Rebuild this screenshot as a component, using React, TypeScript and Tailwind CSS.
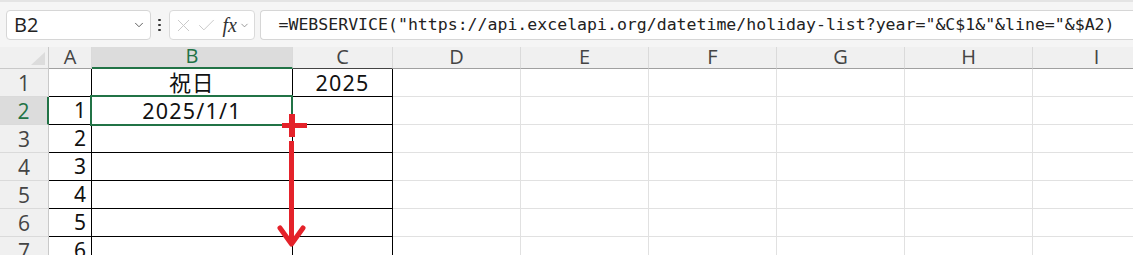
import { Check, ChevronDown, X } from "lucide-react";
import { clsx as cn } from "clsx";

const FORMULA =
  '=WEBSERVICE("https://api.excelapi.org/datetime/holiday-list?year="&C$1&"&line="&$A2)';

const COLUMNS = ["A", "B", "C", "D", "E", "F", "G", "H", "I"];

// cell values, row by row, for columns A..C
const ROWS: { a: string; b: string; c: string }[] = [
  { a: "", b: "祝日", c: "2025" },
  { a: "1", b: "2025/1/1", c: "" },
  { a: "2", b: "", c: "" },
  { a: "3", b: "", c: "" },
  { a: "4", b: "", c: "" },
  { a: "5", b: "", c: "" },
  { a: "6", b: "", c: "" },
];

function FormulaBar() {
  return (
    <div className="flex h-[47px] items-start border-t-2 border-[#e4e4e4] bg-[#f5f5f5] pt-[8px]">
      <div className="ml-[6px] flex h-[30px] w-[145px] items-center justify-between rounded-[4px] border border-[#d6d6d6] bg-white pl-[7px] pr-[4px]">
        <span className="font-['Open_Sans'] text-[20px] leading-none text-[#222]">B2</span>
        <ChevronDown className="h-[14px] w-[14px] text-[#555]" strokeWidth={1.6} />
      </div>
      <div className="ml-[7px] flex h-[30px] flex-col items-center justify-center gap-[2.5px]">
        <span className="h-[2.5px] w-[2.5px] rounded-full bg-[#333]" />
        <span className="h-[2.5px] w-[2.5px] rounded-full bg-[#333]" />
        <span className="h-[2.5px] w-[2.5px] rounded-full bg-[#333]" />
      </div>
      <div className="ml-[8px] flex h-[30px] w-[86px] items-center rounded-[4px] border border-[#dadada] bg-white pl-[3px]">
        <X className="h-[21px] w-[21px] text-[#c8c8c8]" strokeWidth={1.1} />
        <Check className="ml-[2px] h-[21px] w-[21px] text-[#c8c8c8]" strokeWidth={1.1} />
        <span className="ml-[6px] font-['Liberation_Serif'] text-[20px] italic leading-none text-[#333]">fx</span>
        <ChevronDown className="ml-[2px] h-[11px] w-[11px] text-[#777]" strokeWidth={1.6} />
      </div>
      <div className="ml-[5px] flex h-[30px] flex-1 items-center rounded-l-[4px] border border-r-0 border-[#d6d6d6] bg-white pl-[18px]">
        <span className="whitespace-nowrap font-['DejaVu_Sans_Mono'] text-[16.55px] leading-none text-[#222]">
          {FORMULA}
        </span>
      </div>
    </div>
  );
}

function FillArrow() {
  return (
    <svg className="pointer-events-none absolute left-0 top-0" width="400" height="220" viewBox="0 47 400 220">
      <rect x="282" y="123" width="25" height="5" fill="#e4222a" />
      <rect x="289" y="114" width="6" height="23" fill="#e4222a" />
      <rect x="289" y="141" width="5" height="100" fill="#e4222a" />
      <polyline points="280,228 291.5,244 303,228" fill="none" stroke="#e4222a" strokeWidth="5" strokeLinecap="round" strokeLinejoin="round" />
    </svg>
  );
}

function Grid() {
  return (
    <div className="relative">
      <div className="grid grid-cols-[49px_43px_201px_100px_128px_128px_128px_128px_128px_128px] grid-rows-[22px_repeat(7,28px)] font-['Open_Sans'] text-[#444]">
        {/* corner */}
        <div className="relative border-b border-r border-[#c9c9c9] bg-[#f0f0f0]">
          <svg className="absolute bottom-[3px] right-[3px]" width="14" height="13" viewBox="0 0 14 13">
            <polygon points="0,13 14,13 14,0" fill="#dcdcdc" />
          </svg>
        </div>
        {COLUMNS.map((c) => (
          <div
            key={c}
            className={cn(
              "flex items-end justify-center border-r border-[#dadada] text-[20px] leading-none",
              c === "B"
                ? "border-b-2 border-b-[#217346] bg-[#dcdcdc] text-[#217346]"
                : c === "C"
                  ? "border-b border-b-[#444] bg-[#f0f0f0]"
                  : "border-b border-b-[#a0a0a0] bg-[#f0f0f0]"
            )}
          >
            <span className="pb-[1px]">{c}</span>
          </div>
        ))}

        {ROWS.map((row, i) => {
          const selected = i === 1;
          return [
            <div
              key={`h${i}`}
              className={cn(
                "flex items-end justify-center border-b border-b-[#dadada] pb-[2px] text-[21px] leading-none",
                selected
                  ? "border-r-2 border-r-[#217346] bg-[#dcdcdc] text-[#217346]"
                  : "border-r border-r-[#c9c9c9] bg-[#f0f0f0]"
              )}
            >
              {i + 1}
            </div>,
            <div
              key={`a${i}`}
              className="flex items-end justify-end border-b border-r border-black pb-[3px] pr-[5px] font-['Noto_Sans','Noto_Sans_CJK_JP',sans-serif] text-[21px] leading-none text-[#111]"
            >
              {row.a}
            </div>,
            <div
              key={`b${i}`}
              className="flex items-end justify-center border-b border-r border-black pb-[3px] font-['Noto_Sans','Noto_Sans_CJK_JP',sans-serif] text-[21.5px] leading-none tracking-[1.2px] text-[#111]"
            >
              {row.b}
            </div>,
            <div
              key={`c${i}`}
              className="flex items-end justify-center border-b border-r border-black pb-[3px] font-['Noto_Sans','Noto_Sans_CJK_JP',sans-serif] text-[21.5px] leading-none tracking-[1.2px] text-[#111]"
            >
              {row.c}
            </div>,
            ...COLUMNS.slice(3).map((c) => (
              <div key={`${c}${i}`} className="border-b border-r border-[#e1e1e1] bg-white" />
            )),
          ];
        })}
      </div>

      {/* active cell B2 */}
      <div className="pointer-events-none absolute left-[90px] top-[48px] h-[31px] w-[203px] border-2 border-[#217346]" />
      <FillArrow />
    </div>
  );
}

export default function App() {
  return (
    <div className="h-[255px] w-[1133px] overflow-hidden bg-white">
      <FormulaBar />
      <Grid />
    </div>
  );
}
